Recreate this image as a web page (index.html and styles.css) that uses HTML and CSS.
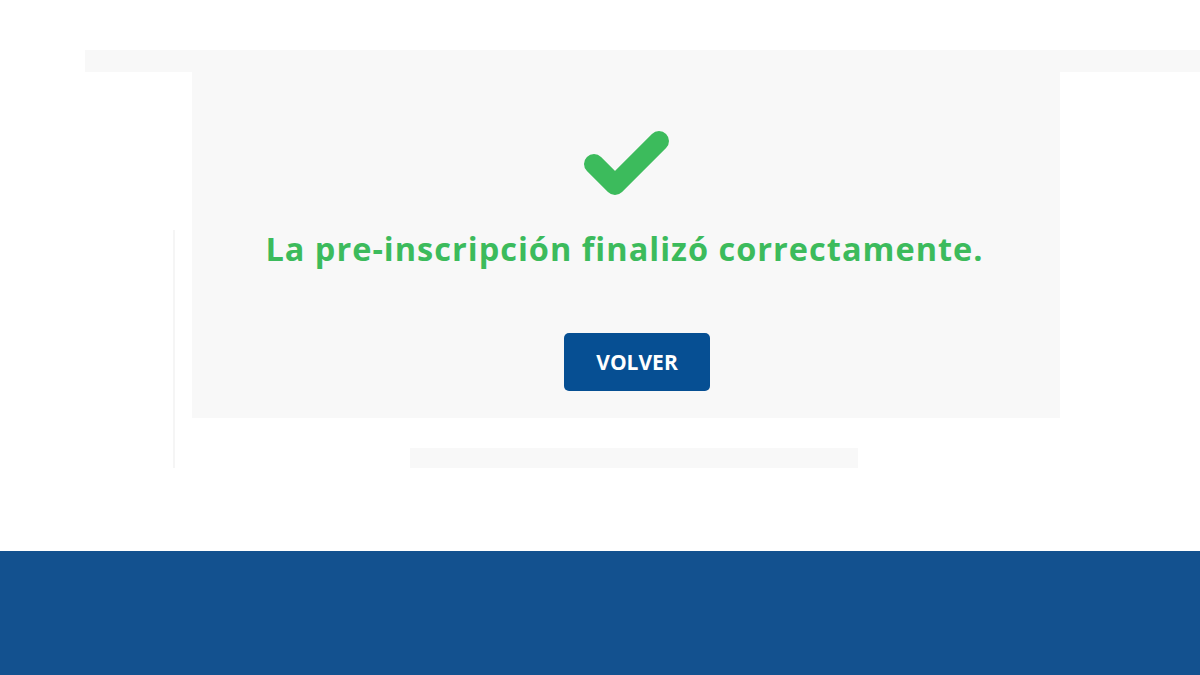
FILE: index.html
```html
<!DOCTYPE html>
<html lang="es">
<head>
<meta charset="utf-8">
<link rel="stylesheet" href="styles.css">
</head>
<body>
<div class="band"></div>
<div class="wrap">
  <div class="panel">
    <svg class="check" viewBox="0 0 86 67" aria-hidden="true"><path d="M10 34 L31 55 L75 11" fill="none" stroke="#3cbb5c" stroke-width="20" stroke-linejoin="round" stroke-linecap="round"/></svg>
    <h1 class="msg">La pre-inscripción finalizó correctamente.</h1>
    <button class="btn">VOLVER</button>
  </div>
  <div class="bar"></div>
</div>
<footer class="footer"></footer>
</body>
</html>
```
FILE: styles.css
```css
html, body { margin: 0; padding: 0; background: #fff; }
body { font-family: "Open Sans", "Noto Sans", sans-serif; height: 675px; overflow: hidden; }
.band { margin: 50px 0 0 85px; height: 22px; background: #f8f8f8; }
.wrap { position: relative; margin-left: 173px; padding-left: 19px; height: 479px; }
.wrap::before { content: ""; position: absolute; left: 0; top: 158px; width: 2px; height: 238px; background: #f5f5f5; }
.panel { width: 868px; height: 346px; background: #f8f8f8; display: flex; flex-direction: column; align-items: center; box-sizing: border-box; padding-top: 58px; }
.check { width: 86px; height: 67px; display: block; margin-left: 2px; overflow: visible; }
.msg { margin: 30px 0 0 -3px; font-size: 32.5px; font-weight: 700; color: #3cbb5c; line-height: 44px; letter-spacing: 1px; white-space: nowrap; }
.btn { margin: 62px 0 0 22px; width: 146px; height: 58px; background: #064f93; color: #fff; border: none; border-radius: 5px; font-family: "Open Sans", "Noto Sans", sans-serif; font-weight: 700; font-size: 21px; padding: 0; }
.bar { margin: 30px 0 0 218px; width: 448px; height: 20px; background: #f8f8f8; }
.footer { height: 124px; background: #13518f; }
```
